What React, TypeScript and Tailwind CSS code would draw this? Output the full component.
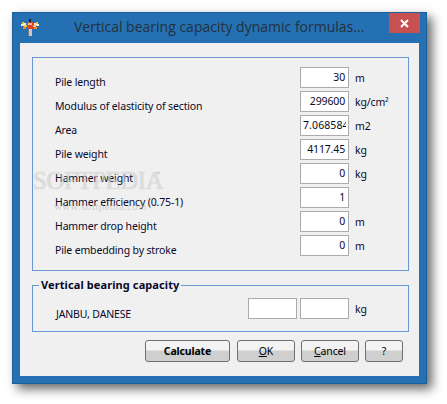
const rows = [
  { label: "Pile length", value: "30", unit: "m" },
  { label: "Modulus of elasticity of section", value: "299600", unit: "kg/cm²" },
  { label: "Area", value: "7.068584", unit: "m2", clipped: true },
  { label: "Pile weight", value: "4117.45", unit: "kg" },
  { label: "Hammer weight", value: "0", unit: "kg" },
  { label: "Hammer efficiency (0.75-1)", value: "1", unit: "" },
  { label: "Hammer drop height", value: "0", unit: "m" },
  { label: "Pile embedding by stroke", value: "0", unit: "m" },
];

function Field({ value, clipped }: { value?: string; clipped?: boolean }) {
  return (
    <div className="flex h-[21px] w-[49px] items-center border border-[#ababab] bg-white px-[2px]">
      <div className={`w-full overflow-hidden whitespace-nowrap ${clipped ? "text-left tracking-[0.1px]" : "pr-[1px] text-right"}`}>{value}</div>
    </div>
  );
}

function DialogButton({ width, bold, children }: { width: string; bold?: boolean; children: React.ReactNode }) {
  return (
    <button
      className={`${width} ${bold ? "font-bold" : ""} h-[22px] rounded-[3px] border border-[#707070] bg-gradient-to-b from-[#f3f3f3] from-45% to-[#cfcfcf] to-50% pt-px text-black`}
    >
      {children}
    </button>
  );
}

function AppIcon() {
  return (
    <svg width="18" height="18" viewBox="0 0 18 18" className="shrink-0">
      <rect x="8" y="0" width="2" height="3" fill="#222" />
      <rect x="6" y="3" width="6" height="7" fill="#d9432c" />
      <rect x="7" y="4" width="4" height="2" fill="#f5b8a0" />
      <rect x="1" y="3" width="2" height="2" fill="#f3c23c" />
      <rect x="3" y="4" width="2" height="2" fill="#f8f0d8" />
      <rect x="13" y="4" width="2" height="2" fill="#f8f0d8" />
      <rect x="15" y="3" width="2" height="2" fill="#f3c23c" />
      <rect x="0" y="5" width="3" height="2" fill="#f8f0d8" />
      <rect x="15" y="5" width="3" height="2" fill="#f8f0d8" />
      <rect x="3" y="6" width="3" height="2" fill="#f3c23c" />
      <rect x="12" y="6" width="3" height="2" fill="#f3c23c" />
      <rect x="2" y="8" width="3" height="2" fill="#e88a30" />
      <rect x="13" y="8" width="3" height="2" fill="#e88a30" />
      <rect x="7" y="10" width="4" height="7" fill="#c9c9c9" />
      <rect x="7" y="10" width="1" height="7" fill="#777" />
    </svg>
  );
}

export default function App() {
  return (
    <div className="h-[404px] w-[447px] overflow-hidden bg-white pl-3 pt-3 font-['Noto_Sans',sans-serif] text-[10.5px] tracking-[-0.15px] text-[#0a0a2a]">
      <div className="relative h-[372px] w-[415px] border border-[#1d5f99] bg-[#2470b2] shadow-[5px_5px_10px_rgba(0,0,0,0.6)]">
        <div className="flex h-[30px] items-start">
          <div className="ml-[8px] mt-[6px]">
            <AppIcon />
          </div>
          <div className="ml-[35px] mt-[3px] whitespace-nowrap font-['Open_Sans',sans-serif] text-[14px] leading-[22px] tracking-normal text-[#24303c]">
            Vertical bearing capacity dynamic formulas...
          </div>
          <div className="ml-auto mr-[6px] flex h-[20px] w-[31px] items-center justify-center bg-[#c75050]">
            <svg width="9" height="9" viewBox="0 0 9 9">
              <path d="M1 1 L8 8 M8 1 L1 8" stroke="white" strokeWidth="2" />
            </svg>
          </div>
        </div>
        <div className="mx-[7px] flex h-[333px] w-[399px] flex-col bg-[#f0f0f0] pl-3 pr-[10px] pt-[14px]">
          <div className="flex h-[214px] flex-col gap-[3px] border border-[#6b97d3] pl-[22px] pt-[9px]">
            {rows.map((row) => (
              <div key={row.label} className="flex h-[21px] items-center">
                <div className="w-[245px] pt-[10px]">{row.label}</div>
                <Field value={row.value} clipped={row.clipped} />
                <div className="ml-[6px] pt-[2px]">{row.unit}</div>
              </div>
            ))}
          </div>
          <div className="relative mt-[14px] flex h-[47px] items-center border border-[#6b97d3] pl-[23px]">
            <div className="absolute left-[6px] top-[-9px] bg-[#f0f0f0] px-[2px] text-[11px] font-bold leading-[16px] tracking-[0.1px] text-[#08082a]">
              Vertical bearing capacity
            </div>
            <div className="w-[192px] pt-[12px]">JANBU, DANESE</div>
            <div className="flex gap-[3px]">
              <Field />
              <Field />
            </div>
            <div className="ml-[6px] pt-[2px]">kg</div>
          </div>
          <div className="mt-2 flex gap-[6px] pl-[113px]">
            <DialogButton width="w-[85px] mr-[1px]" bold>
              Calculate
            </DialogButton>
            <DialogButton width="w-[58px]">
              <span className="underline">O</span>K
            </DialogButton>
            <DialogButton width="w-[58px]">
              <span className="underline">C</span>ancel
            </DialogButton>
            <DialogButton width="w-[38px]">?</DialogButton>
          </div>
        </div>
        <div className="pointer-events-none absolute left-[20px] top-[154px] font-['Liberation_Serif',serif] text-[25px] leading-[28px] tracking-[-0.5px] text-white/50 [text-shadow:0_0_1px_rgba(0,0,0,0.25)]">
          SOFTPEDIA
        </div>
        <div className="pointer-events-none absolute left-[143px] top-[157px] text-[6px] leading-[8px] text-[#b9b9b9]">
          ™
        </div>
        <div className="pointer-events-none absolute left-[41px] top-[186px] font-['Liberation_Serif',serif] text-[11px] leading-[14px] tracking-[0.3px] text-[#b9b9b9]/60">
          www.softpedia.com
        </div>
      </div>
    </div>
  );
}
